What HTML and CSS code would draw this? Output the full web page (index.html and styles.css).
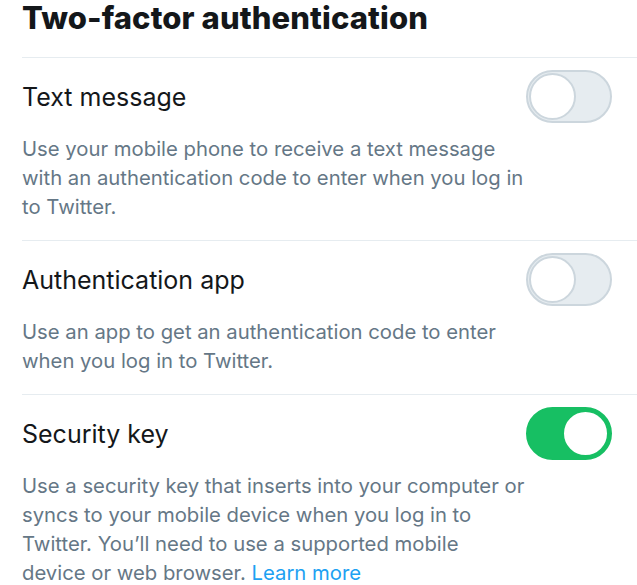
FILE: index.html
```html
<!DOCTYPE html>
<html>
<head>
    <title>Two-factor authentication</title>
    <link rel="stylesheet" href="styles.css">
</head>
<body>
    <div class="settings">
        <h1 class="title">Two-factor authentication</h1>

        <div class="option">
            <div class="option-head">
                <span class="option-label">Text message</span>
                <span class="toggle"><span class="knob"></span></span>
            </div>
            <p class="option-desc">Use your mobile phone to receive a text message<br>with an authentication code to enter when you log in<br>to Twitter.</p>
        </div>

        <div class="option">
            <div class="option-head">
                <span class="option-label">Authentication app</span>
                <span class="toggle"><span class="knob"></span></span>
            </div>
            <p class="option-desc">Use an app to get an authentication code to enter<br>when you log in to Twitter.</p>
        </div>

        <div class="option">
            <div class="option-head">
                <span class="option-label">Security key</span>
                <span class="toggle on"><span class="knob"></span></span>
            </div>
            <p class="option-desc">Use a security key that inserts into your computer or<br>syncs to your mobile device when you log in to<br>Twitter. You’ll need to use a supported mobile<br>device or web browser. <a href="#" class="link">Learn more</a></p>
        </div>
    </div>
</body>
</html>
```

FILE: styles.css
```css
body {
    margin: 0;
    background: #fff;
    font-family: Inter, "Liberation Sans", Arial, sans-serif;
    color: #14171a;
}
.settings {
    padding-left: 22px;
}
.title {
    margin: 0;
    font-size: 31px;
    font-weight: 800;
    letter-spacing: 0.1px;
    line-height: 35px;
    padding-bottom: 22px;
    border-bottom: 1px solid #e6ecf0;
}
.option {
    padding: 12px 0 19px;
    border-bottom: 1px solid #e6ecf0;
}
.option:last-child {
    border-bottom: none;
}
.option-head {
    display: flex;
    align-items: center;
    justify-content: space-between;
    padding-right: 25px;
}
.option-label {
    font-size: 25px;
}
.toggle {
    position: relative;
    width: 86px;
    height: 53px;
    box-sizing: border-box;
    border: 2px solid #ccd6dd;
    border-radius: 27px;
    background: #e6ecf0;
}
.knob {
    position: absolute;
    top: 1px;
    left: 1px;
    width: 47px;
    height: 47px;
    box-sizing: border-box;
    border-radius: 50%;
    background: #fff;
    border: 2px solid #ccd6dd;
}
.toggle.on {
    background: #17bf63;
    border-color: #17bf63;
}
.toggle.on .knob {
    left: auto;
    right: 1px;
    border-color: #17bf63;
}
.option-desc {
    margin: 11px 0 0;
    font-size: 20.3px;
    line-height: 29px;
    color: #657786;
}
.link {
    color: #1da1f2;
    text-decoration: none;
}
```
